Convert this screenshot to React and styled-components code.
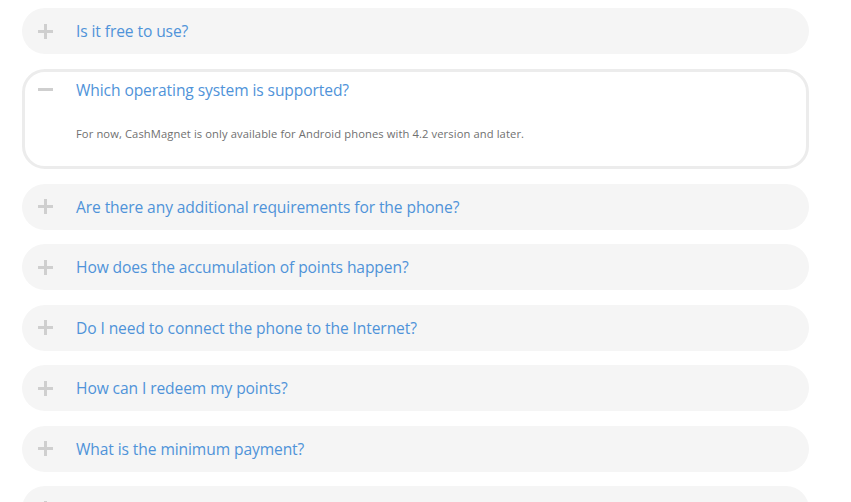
import React, {useState} from 'react';
import styled, {createGlobalStyle, css} from 'styled-components';

const GlobalStyle = createGlobalStyle`
    body {
        margin: 0;
        background: #ffffff;
        font-family: 'Open Sans', 'Noto Sans', sans-serif;
    }
`;

const FaqList = styled.div`
    display: flex;
    flex-direction: column;
    gap: 14.4px;
    width: 787px;
    padding: 8px 0 0 22px;
    height: 494px;
    overflow: hidden;
`;

const Item = styled.div`
    flex-shrink: 0;
    box-sizing: border-box;
    border-radius: 23px;
    background-color: #f5f5f5;
    ${(props) =>
            props.open &&
            css`
                background-color: #ffffff;
                border: 3px solid #ececec;
                margin: 0.6px 0;
            `}
`;

const Question = styled.div`
    display: flex;
    align-items: center;
    height: ${(props) => (props.open ? '36px' : '46px')};
    padding-left: ${(props) => (props.open ? '13px' : '16px')};
    cursor: pointer;
`;

const Toggle = styled.span`
    position: relative;
    width: 15px;
    height: 15px;
    margin-right: 23px;
    flex-shrink: 0;

    &::before, &::after {
        content: '';
        position: absolute;
        background: #cfcfcf;
    }
    &::before {
        left: 0;
        top: 6px;
        width: 15px;
        height: 3px;
    }
    &::after {
        left: 6px;
        top: 0;
        width: 3px;
        height: 15px;
        display: ${(props) => (props.open ? 'none' : 'block')};
    }
`;

const QuestionText = styled.span`
    font-size: 15.6px;
    color: #4f93d9;
    letter-spacing: -0.1px;
`;

const Answer = styled.div`
    padding: 18.5px 0 24.5px 51px;
    font-size: 11.2px;
    line-height: 15px;
    color: #707070;
    letter-spacing: 0.1px;
`;

const faqs = [
    {q: 'Is it free to use?', a: ''},
    {q: 'Which operating system is supported?', a: 'For now, CashMagnet is only available for Android phones with 4.2 version and later.'},
    {q: 'Are there any additional requirements for the phone?', a: ''},
    {q: 'How does the accumulation of points happen?', a: ''},
    {q: 'Do I need to connect the phone to the Internet?', a: ''},
    {q: 'How can I redeem my points?', a: ''},
    {q: 'What is the minimum payment?', a: ''},
    {q: 'How long does it take to receive the payment?', a: ''},
];

const App = () => {
    const [openIndex, setOpenIndex] = useState(1);

    return (
        <>
            <GlobalStyle/>
            <FaqList>
                {faqs.map((faq, index) => {
                    const open = openIndex === index;
                    return (
                        <Item key={index} open={open}>
                            <Question open={open} onClick={() => setOpenIndex(open ? null : index)}>
                                <Toggle open={open}/>
                                <QuestionText>{faq.q}</QuestionText>
                            </Question>
                            {open && <Answer>{faq.a}</Answer>}
                        </Item>
                    );
                })}
            </FaqList>
        </>
    );
};

export default App;
